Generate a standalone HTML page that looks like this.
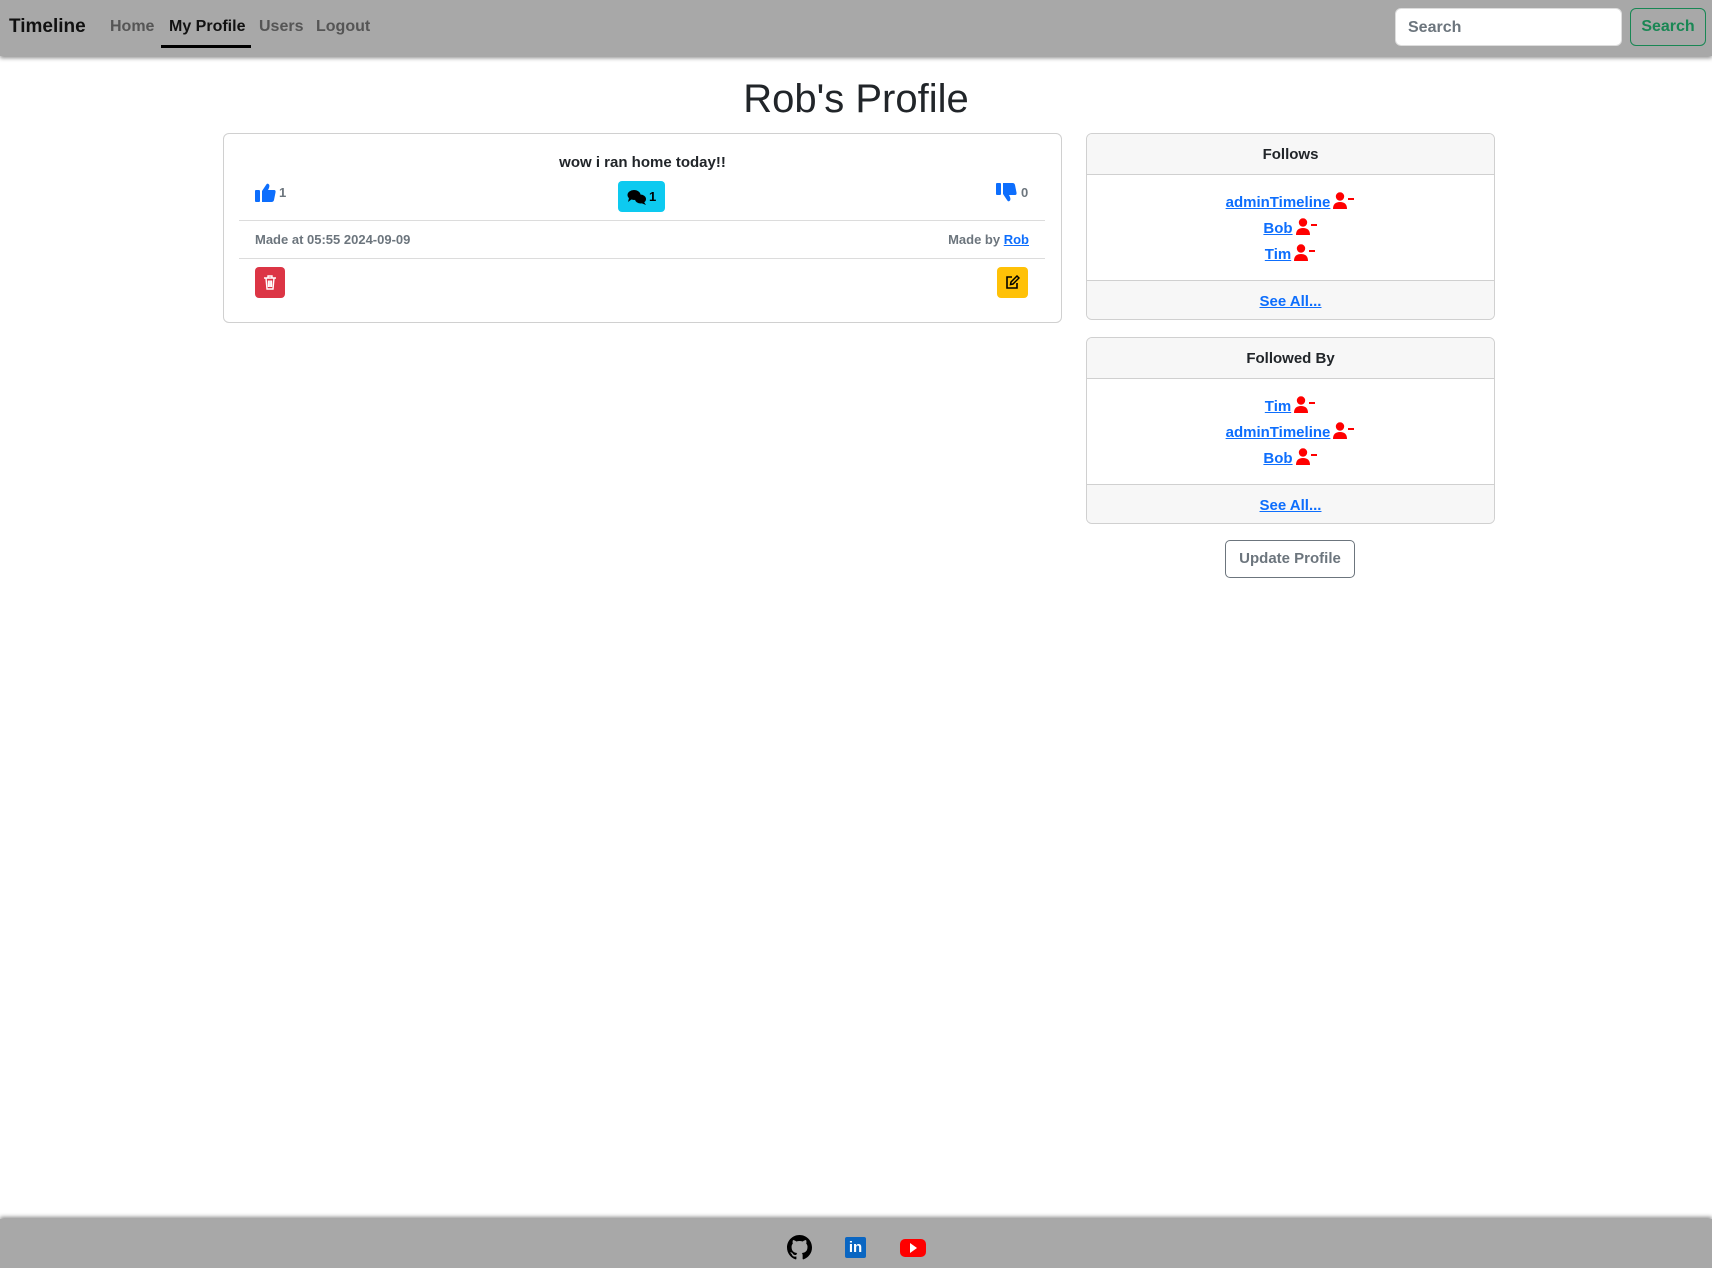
<!DOCTYPE html>
<html><head><meta charset="utf-8"><style>
*{box-sizing:border-box;margin:0;padding:0}
body{width:1712px;height:1268px;position:relative;background:#fff;font-family:"Liberation Sans",sans-serif;overflow:hidden;color:#212529}
.abs{position:absolute}
.nav{left:0;top:0;width:1712px;height:56px;background:#a8a8a8;box-shadow:0 2px 4px rgba(0,0,0,.45)}
.brand{left:9px;top:16px;font-size:19px;font-weight:bold;color:#111}
.nl{top:18px;font-size:16px;font-weight:bold;color:#555}
.search{left:1395px;top:8px;width:227px;height:38px;background:#fff;border-radius:6px;border:1px solid #ddd;font-size:16px;font-weight:bold;color:#6c757d;padding:10px 12px}
.sbtn{left:1630px;top:8px;width:76px;height:38px;border:1px solid #198754;border-radius:6px;color:#198754;font-size:16px;font-weight:bold;text-align:center;line-height:36px}
h1{position:absolute;left:0;width:1712px;top:77px;text-align:center;font-weight:normal;font-size:40px;color:#212529}
.card{border:1px solid #d0d0d0;border-radius:6px;background:#fff}
.hr{height:1px;background:#dcdcdc}
.g{color:#6c757d;font-weight:bold;font-size:13px}
a{color:#0d6efd;text-decoration:underline;font-weight:bold}
.side{left:1086px;width:409px;overflow:hidden}
.hd{height:41px;background:#f7f7f7;border-bottom:1px solid #d0d0d0;text-align:center;font-weight:bold;font-size:15px;line-height:41px;color:#212529}
.ft{background:#f7f7f7;border-top:1px solid #d0d0d0;text-align:center;font-size:15px;height:41px;line-height:41px}
.lst{text-align:center;font-size:15px;line-height:24px;padding-top:16px;height:105px}
.ic{display:inline-block;vertical-align:-2px;margin-left:3px}
.foot{left:0;top:1219px;width:1712px;height:49px;background:#a8a8a8;box-shadow:0 -2px 4px rgba(0,0,0,.45)}
</style></head><body>
<div class="abs nav"></div>
<div class="abs brand">Timeline</div>
<div class="abs nl" style="left:110px">Home</div>
<div class="abs nl" style="left:169px;color:#111">My Profile</div>
<div class="abs" style="left:161px;top:45px;width:90px;height:3px;background:#000"></div>
<div class="abs nl" style="left:259px">Users</div>
<div class="abs nl" style="left:316px">Logout</div>
<div class="abs search">Search</div>
<div class="abs sbtn">Search</div>

<h1>Rob's Profile</h1>

<div class="abs card" style="left:223px;top:133px;width:839px;height:190px"></div>
<div class="abs" style="left:223px;width:839px;top:154px;text-align:center;font-weight:bold;font-size:15px">wow i ran home today!!</div>
<svg class="abs" style="left:255px;top:183px" width="21" height="19" viewBox="0 0 21 19"><rect x="0" y="7" width="5" height="12" rx="1" fill="#0d6efd"/><path d="M7 8 L11 2 Q12 0 13.5 1 Q15 2 14 5 L13 7 H19 Q21 7 20.5 9.5 L19 17 Q18.5 19 16.5 19 H7 Z" fill="#0d6efd"/></svg>
<div class="abs g" style="left:279px;top:185px">1</div>
<div class="abs" style="left:618px;top:181px;width:47px;height:31px;background:#0dcaf0;border-radius:4px"></div>
<svg class="abs" style="left:627px;top:189px" width="20" height="16" viewBox="0 0 20 16"><ellipse cx="7" cy="6" rx="6.5" ry="5" fill="#000"/><path d="M2 9 L1 13 L5 10Z" fill="#000"/><ellipse cx="13.5" cy="10" rx="5.5" ry="4.5" fill="#000"/><path d="M17 13 L19 16 L14 14Z" fill="#000"/></svg>
<div class="abs" style="left:649px;top:189px;font-weight:bold;font-size:13px;color:#000">1</div>
<svg class="abs" style="left:996px;top:183px" width="21" height="19" viewBox="0 0 21 19"><g transform="translate(0,19) scale(1,-1)"><rect x="0" y="7" width="5" height="12" rx="1" fill="#0d6efd"/><path d="M7 8 L11 2 Q12 0 13.5 1 Q15 2 14 5 L13 7 H19 Q21 7 20.5 9.5 L19 17 Q18.5 19 16.5 19 H7 Z" fill="#0d6efd"/></g></svg>
<div class="abs g" style="left:1021px;top:185px">0</div>
<div class="abs hr" style="left:239px;top:220px;width:806px"></div>
<div class="abs g" style="left:255px;top:232px">Made at 05:55 2024-09-09</div>
<div class="abs g" style="right:683px;top:232px">Made by <a style="font-size:13px">Rob</a></div>
<div class="abs hr" style="left:239px;top:258px;width:806px"></div>
<div class="abs" style="left:255px;top:267px;width:30px;height:31px;background:#dc3545;border-radius:4px"></div>
<svg class="abs" style="left:263px;top:275px" width="14" height="15" viewBox="0 0 14 15"><path d="M1 3 H13 M5 3 V1 H9 V3 M3 3 L4 14 H10 L11 3 M5.5 5.5 V12 M7 5.5 V12 M8.5 5.5 V12" stroke="#fff" stroke-width="1.4" fill="none"/></svg>
<div class="abs" style="left:997px;top:267px;width:31px;height:31px;background:#ffc107;border-radius:4px"></div>
<svg class="abs" style="left:1005px;top:275px" width="15" height="15" viewBox="0 0 15 15"><path d="M7 2 H2 V13 H12 V8" stroke="#000" stroke-width="1.6" fill="none"/><path d="M12 1 L14 3 L8 9 L5.5 9.5 L6 7 Z" stroke="#000" stroke-width="1.5" fill="none"/></svg>

<div class="abs card side" style="top:133px;height:187px">
<div class="hd">Follows</div>
<div class="lst"><a>adminTimeline</a><span class="ic"><svg width="22" height="17" viewBox="0 0 22 17"><circle cx="7" cy="4.5" r="4.2" fill="#f00"/><path d="M0 17 Q0 10 7 10 Q14 10 14 17Z" fill="#f00"/><rect x="15" y="6" width="6" height="2" fill="#f00"/></svg></span><br><a>Bob</a><span class="ic"><svg width="22" height="17" viewBox="0 0 22 17"><circle cx="7" cy="4.5" r="4.2" fill="#f00"/><path d="M0 17 Q0 10 7 10 Q14 10 14 17Z" fill="#f00"/><rect x="15" y="6" width="6" height="2" fill="#f00"/></svg></span><br><a>Tim</a><span class="ic"><svg width="22" height="17" viewBox="0 0 22 17"><circle cx="7" cy="4.5" r="4.2" fill="#f00"/><path d="M0 17 Q0 10 7 10 Q14 10 14 17Z" fill="#f00"/><rect x="15" y="6" width="6" height="2" fill="#f00"/></svg></span></div>
<div class="ft"><a>See All...</a></div>
</div>

<div class="abs card side" style="top:337px;height:187px">
<div class="hd">Followed By</div>
<div class="lst"><a>Tim</a><span class="ic"><svg width="22" height="17" viewBox="0 0 22 17"><circle cx="7" cy="4.5" r="4.2" fill="#f00"/><path d="M0 17 Q0 10 7 10 Q14 10 14 17Z" fill="#f00"/><rect x="15" y="6" width="6" height="2" fill="#f00"/></svg></span><br><a>adminTimeline</a><span class="ic"><svg width="22" height="17" viewBox="0 0 22 17"><circle cx="7" cy="4.5" r="4.2" fill="#f00"/><path d="M0 17 Q0 10 7 10 Q14 10 14 17Z" fill="#f00"/><rect x="15" y="6" width="6" height="2" fill="#f00"/></svg></span><br><a>Bob</a><span class="ic"><svg width="22" height="17" viewBox="0 0 22 17"><circle cx="7" cy="4.5" r="4.2" fill="#f00"/><path d="M0 17 Q0 10 7 10 Q14 10 14 17Z" fill="#f00"/><rect x="15" y="6" width="6" height="2" fill="#f00"/></svg></span></div>
<div class="ft"><a>See All...</a></div>
</div>

<div class="abs" style="left:1225px;top:540px;width:130px;height:38px;border:1px solid #6c757d;border-radius:5px;color:#6c757d;font-weight:bold;font-size:15px;text-align:center;line-height:36px">Update Profile</div>

<div class="abs foot"></div>
<svg class="abs" style="left:787px;top:1235px" width="25" height="25" viewBox="0 0 16 16"><path fill="#000" d="M8 0C3.58 0 0 3.580 0 8c0 3.54 2.29 6.53 5.47 7.59.4.07.55-.17.55-.38 0-.19-.01-.82-.01-1.49-2.01.37-2.53-.49-2.69-.94-.09-.23-.48-.94-.82-1.130-.28-.15-.68-.52-.01-.53.63-.01 1.08.58 1.23.82.72 1.21 1.87.87 2.33.66.07-.52.28-.87.51-1.07-1.78-.2-3.64-.89-3.64-3.95 0-.87.31-1.59.82-2.15-.08-.2-.36-1.02.08-2.12 0 0 .67-.21 2.2.82.64-.18 1.32-.27 2-.27.68 0 1.36.09 2 .27 1.53-1.04 2.2-.82 2.2-.82.44 1.1.16 1.92.08 2.12.51.56.82 1.27.82 2.15 0 3.07-1.87 3.75-3.65 3.95.29.25.54.73.54 1.48 0 1.07-.01 1.93-.01 2.2 0 .21.15.46.55.38A8.013 8.013 0 0016 8c0-4.42-3.58-8-8-8z"/></svg>
<div class="abs" style="left:845px;top:1237px;width:21px;height:21px;background:#0a66c2;border-radius:2px;color:#fff;font-weight:bold;font-size:15px;line-height:22px;text-align:center">in</div>
<div class="abs" style="left:900px;top:1239px;width:26px;height:18px;background:#f00;border-radius:5px"></div>
<svg class="abs" style="left:909px;top:1243px" width="9" height="10" viewBox="0 0 9 10"><path d="M1 0 L8 5 L1 10Z" fill="#fff"/></svg>
</body></html>
